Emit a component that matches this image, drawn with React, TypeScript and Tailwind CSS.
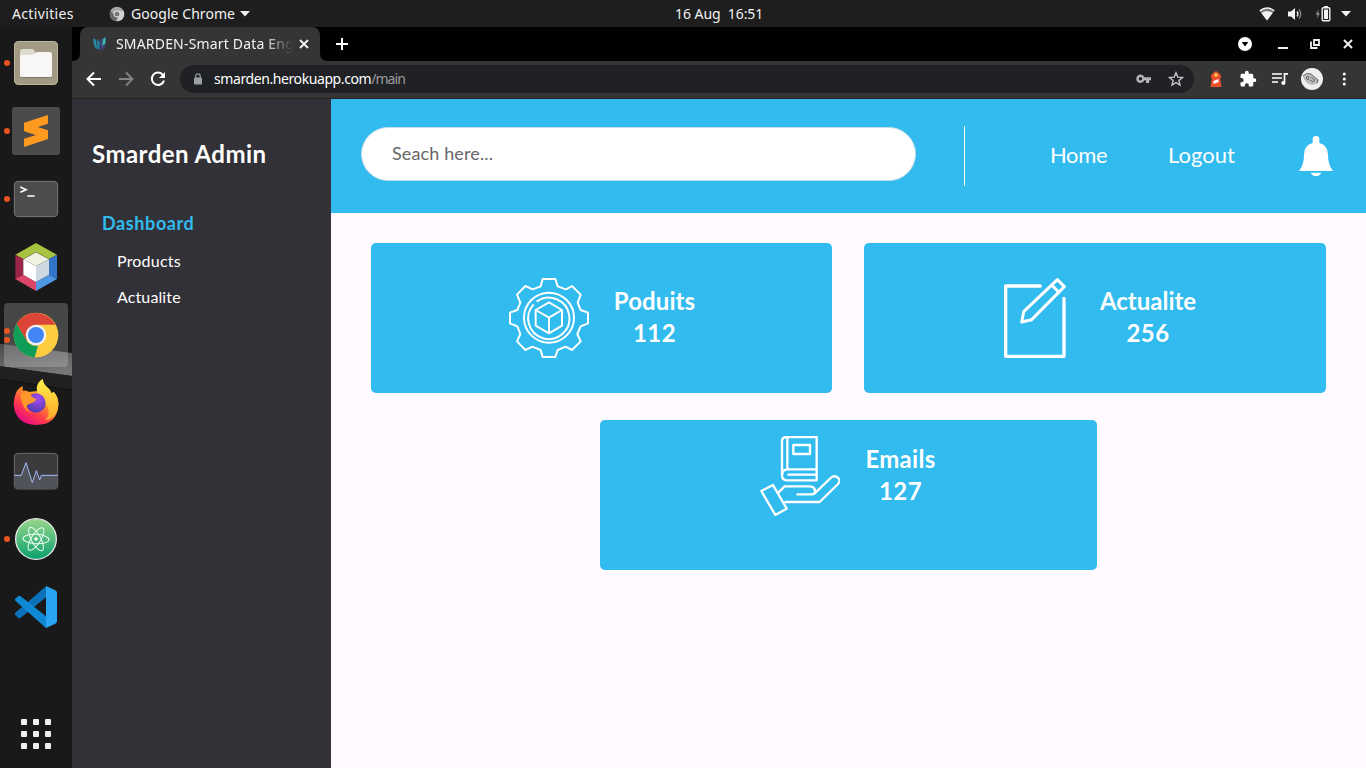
import React from "react";

const UI = "font-['Noto_Sans',sans-serif]";

function DockItem({ dots = 0, active = false, viewBox, children }: { dots?: number; active?: boolean; viewBox: string; children: React.ReactNode }) {
  return (
    <div className="relative flex h-[68px] w-[72px] shrink-0 items-center justify-center">
      {active && <div className="absolute left-1 top-[2px] h-16 w-16 rounded-[4px] bg-white/20" />}
      <svg className="relative h-12 w-12 overflow-visible" viewBox={viewBox}>{children}</svg>
      {dots > 0 && (
        <div className="absolute left-[4px] top-0 flex h-full flex-col items-center justify-center gap-[3px]">
          {Array.from({ length: dots }, (_, i) => (
            <span key={i} className="h-[6px] w-[6px] rounded-full bg-[#e95420]" />
          ))}
        </div>
      )}
    </div>
  );
}

function Dock() {
  return (
    <nav className="relative flex w-[72px] shrink-0 flex-col overflow-hidden bg-[#191919] pt-[2px]">
      <svg className="absolute left-0 top-[310px] h-[100px] w-[72px]" viewBox="0 330 216 300">
        <defs>
          <linearGradient id="band" x1="0" y1="0" x2="0.3" y2="1">
            <stop offset="0" stopColor="#4b4b4b" />
            <stop offset="1" stopColor="#757575" />
          </linearGradient>
        </defs>
        <path d="M0 350L216 378V447L0 418Z" fill="url(#band)" />
        <path d="M0 418L216 447V492L0 460Z" fill="#202020" />
        <path d="M0 457L216 490" stroke="#111" strokeWidth="4" />
      </svg>
      <DockItem dots={1} viewBox="36 36 144 144">
        <rect x="42" y="42" width="132" height="132" rx="14" fill="#a39a83" />
        <rect x="43.500" y="43.500" width="129" height="129" rx="13" fill="none" stroke="#bbb4a1" strokeWidth="3" />
        <path d="M60 84V74q0-8 8-8h27q5 0 7 4l4 8h30v20H60Z" fill="#dedacd" />
        <path d="M60 89q0-6 6-6h30q5 0 9-4 5-4 10-4h33q8 0 8 8v60q0 8-8 8H68q-8 0-8-8Z" fill="#f8f7f5" />
        <path d="M64 151q2 1 4 1h80q4 0 6-2" stroke="#766f5d" strokeWidth="3" fill="none" />
      </DockItem>
      <DockItem dots={1} viewBox="36 240 144 144">
        <rect x="36" y="240" width="144" height="144" rx="8" fill="#4a4a4a" />
        <path d="M72 335l72-22v23l-72 24Z" fill="#ff9a20" />
        <path d="M72 312l72 24v-23l-36-11Z" fill="#e28210" />
        <path d="M72 287l72-23v26l-31 10 31 10v26l-72-24Z" fill="#ff9a20" />
      </DockItem>
      <DockItem dots={1} viewBox="36 444 144 144">
        <rect x="43" y="463" width="130" height="106" rx="11" fill="#4c4c4c" stroke="#777" strokeWidth="3" />
        <path d="M61 480l17 8-17 8M82 507h22" stroke="#fff" strokeWidth="5" fill="none" />
      </DockItem>
      <DockItem viewBox="36 48 144 144">
        <path d="M108 48l63 35-24 13-39-21-38 21-24-13Z" fill="#a8c33f" />
        <path d="M46 83l24 13v47l-24 13Z" fill="#9b2546" />
        <path d="M46 156l24-13 38 22v27Z" fill="#dc4669" />
        <path d="M171 83l-24 13v47l24 13Z" fill="#3274c7" />
        <path d="M171 156l-24-13-39 22v27Z" fill="#4d98e3" />
        <path d="M108 76l39 21-39 21-38-21Z" fill="#eff2df" />
        <path d="M70 97l38 21v47l-38-22Z" fill="#fff" />
        <path d="M147 97l-39 21v47l39-22Z" fill="#ccd8e2" />
      </DockItem>
      <DockItem dots={2} active viewBox="36 252 144 144">
        <circle cx="108" cy="324" r="67" fill="#ffcd40" />
        <path d="M50 290A67 67 0 0 1 166 293H108L79 341Z" fill="#db4437" />
        <path d="M50 290l29 50q12 19 35 16l-10 35A67 67 0 0 1 50 290Z" fill="#0f9d58" />
        <circle cx="108" cy="324" r="31" fill="#f1f1f1" />
        <circle cx="108" cy="324" r="24" fill="#4285f4" />
      </DockItem>
      <DockItem viewBox="36 456 144 144">
        <defs>
          <linearGradient id="fx" x1="0.85" y1="0.1" x2="0.25" y2="1">
            <stop offset="0" stopColor="#fff44f" />
            <stop offset="0.4" stopColor="#ff9825" />
            <stop offset="0.7" stopColor="#ff3b4d" />
            <stop offset="1" stopColor="#e30587" />
          </linearGradient>
          <linearGradient id="fy" x1="0" y1="0" x2="0" y2="1">
            <stop offset="0" stopColor="#fff04a" />
            <stop offset="1" stopColor="#ffa52b" />
          </linearGradient>
          <radialGradient id="fg" cx="0.6" cy="0.3" r="0.8">
            <stop offset="0" stopColor="#a64bf0" />
            <stop offset="1" stopColor="#473aa6" />
          </radialGradient>
        </defs>
        <path d="M48 497q5-12 20-20v14q12-2 20 4 8-2 22-2 4-28 18-37 2 18 16 26 8 6 10 17l7-5q14 16 14 38-2 62-67 62-61-2-67-60 0-22 7-37Z" fill="url(#fx)" />
        <path d="M110 483q2-18 18-27 2 18 18 30 13 12 9 26 6-9 5-18 16 16 15 42-2 22-16 34-10 9-25 10 17-14 11-34-5-15-18-25-14-12-17-38Z" fill="url(#fy)" />
        <circle cx="108" cy="528" r="29" fill="url(#fg)" />
        <path d="M60 505q14-13 33-9-4 6 1 12 8 7 14 8-1 9-15 13-11 3-14 10 4 17 22 19-19 1-29-17-7-15-12-36Z" fill="#ff982b" />
      </DockItem>
      <DockItem viewBox="36 51 144 144">
        <rect x="43" y="70" width="130" height="107" rx="11" fill="#3b3b3d" stroke="#6b6b6b" strokeWidth="3" />
        <path d="M44 135h20l14-36 19 59 12-36 11 28 4-15h48v31q0 10-10 10H54q-10 0-10-10Z" fill="#505359" />
        <path d="M42 136h22l14-38 19 60 12-36 10 28 5-14h50" fill="none" stroke="#a4baf5" strokeWidth="3" />
      </DockItem>
      <DockItem dots={1} viewBox="36 255 144 144">
        <defs>
          <linearGradient id="atom" x1="0" y1="0" x2="0" y2="1">
            <stop offset="0" stopColor="#9bd68c" />
            <stop offset="1" stopColor="#08a16d" />
          </linearGradient>
        </defs>
        <circle cx="108" cy="327" r="61" fill="url(#atom)" stroke="#e9e9e9" strokeWidth="4" />
        <g fill="none" stroke="#e8fff0" strokeWidth="3">
          <ellipse cx="108" cy="327" rx="39" ry="14" transform="rotate(3 108 327)" />
          <ellipse cx="108" cy="327" rx="39" ry="14" transform="rotate(62 108 327)" />
          <ellipse cx="108" cy="327" rx="39" ry="14" transform="rotate(122 108 327)" />
        </g>
        <circle cx="108" cy="327" r="5.500" fill="#fff" />
      </DockItem>
      <DockItem viewBox="36 459 144 144">
        <path d="M45 549l93-80v33l-77 62q-4 2-7-1l-8-8q-3-4-1-6Z" fill="#0b71b9" />
        <path d="M138 594L46 512q-3-4 0-6l8-7q4-3 8 0l76 60Z" fill="#1089d5" />
        <path d="M138 468l28 13q5 3 5 8v84q0 5-5 8l-28 13Z" fill="#27a5f3" />
      </DockItem>
      <div className="mt-auto mb-[19px] ml-[21px] grid w-[30px] grid-cols-3 gap-[6px]">
        {Array.from({ length: 9 }, (_, i) => (
          <span key={i} className="h-[6px] w-[6px] rounded-[1px] bg-[#f0f0ee]" />
        ))}
      </div>
    </nav>
  );
}

function TopBar() {
  return (
    <div className={`flex h-[27px] shrink-0 items-center bg-[#1e1e1e] text-[14px] leading-[27px] text-[#f2f2f2] ${UI}`}>
      <span className="ml-3 w-[63px] whitespace-nowrap tracking-[0.35px]">Activities</span>
      <svg className="ml-[34px] h-4 w-4" viewBox="0 0 16 16">
        <circle cx="8" cy="8" r="7.300" fill="#a5a5a5" />
        <path d="M1.600 4.500A7.300 7.300 0 0 0 7 15.200L9.500 9 5 9Z" fill="#666" />
        <path d="M8 5h6.600A7.300 7.300 0 0 1 7.500 15.300L11 9Z" fill="#cfcfcf" />
        <circle cx="8" cy="8" r="3.400" fill="#e5e5e5" />
        <circle cx="8" cy="8" r="2.500" fill="#777" />
      </svg>
      <span className="ml-[6px] w-[104px] whitespace-nowrap tracking-[0.05px]">Google Chrome</span>
      <svg className="ml-[5px] h-[6px] w-[10px]" viewBox="0 0 10 6"><path d="M0 0h10L5 5.500Z" fill="#f2f2f2" /></svg>
      <span className="-mt-px ml-[425px] w-[90px] whitespace-pre tracking-[-0.05px]">16 Aug  16:51</span>
      <div className="ml-auto flex items-center pr-[15px]">
        <svg className="h-4 w-4" viewBox="0 0 16 16">
          <path d="M8 14.500L.5 4.800Q8-1 15.500 4.800Z" fill="#777" />
          <path d="M.8 4.800Q8-.8 15.200 4.800" stroke="#f2f2f2" strokeWidth="1.500" fill="none" />
          <path d="M8 14.500L2.300 7Q8 3 13.700 7Z" fill="#f2f2f2" />
        </svg>
        <svg className="ml-[12px] h-4 w-4" viewBox="0 0 16 16">
          <path d="M1 5.500h3L8 2v12L4 10.500H1Z" fill="#f2f2f2" />
          <path d="M10 5.500q2 2.500 0 5" stroke="#eee" strokeWidth="1.300" fill="none" />
          <path d="M12 3.500q3.500 4.500 0 9" stroke="#888" strokeWidth="1.300" fill="none" />
        </svg>
        <svg className="-mt-px ml-[12px] h-[17px] w-4" viewBox="0 0 16 17">
          <path d="M4 4L.5 9.500h2L2 13.500 5 8H3Z" fill="#888" />
          <path d="M9 1h4v2H9Z" fill="#f2f2f2" />
          <rect x="7.200" y="2.700" width="7.600" height="13" rx="1" fill="none" stroke="#f2f2f2" strokeWidth="1.400" />
          <rect x="9" y="4.500" width="4" height="9.500" fill="#f2f2f2" />
        </svg>
        <svg className="ml-[10px] h-[6px] w-[10px]" viewBox="0 0 10 6"><path d="M0 0h10L5 5.500Z" fill="#f2f2f2" /></svg>
      </div>
    </div>
  );
}

function TabStrip() {
  return (
    <div className="flex h-[34px] shrink-0 items-center bg-black">
      <div className="relative ml-2 flex h-full w-[240px] items-center rounded-t-[8px] bg-[#353535]">
        <svg className="absolute -left-2 bottom-0 h-2 w-2" viewBox="0 0 8 8"><path d="M8 0v8H0Q8 8 8 0Z" fill="#353535" /></svg>
        <svg className="absolute -right-2 bottom-0 h-2 w-2" viewBox="0 0 8 8"><path d="M0 0v8h8Q0 8 0 0Z" fill="#353535" /></svg>
        <svg className="ml-[12px] h-4 w-4" viewBox="0 0 16 16">
          <path d="M1.500 2l2.500 2 1 9-1.500-1Q1 8 1.500 2Z" fill="#2d8ca5" />
          <path d="M5 3l3 3-.5 8L5 12.500Z" fill="#247a98" />
          <path d="M8.500 3l2-1v6l-2.500 7Z" fill="#3a4589" />
          <path d="M11 3l2.500-2q.5 8-2 10l-1.500 1Z" fill="#3cbbb9" />
          <path d="M11 9l2.500-1q-1 5-4.500 7Z" fill="#423c7e" />
        </svg>
        <div className={`-mt-px ml-2 w-[177px] overflow-hidden whitespace-nowrap text-[14px] tracking-[0.18px] text-[#f3f3f3] [mask-image:linear-gradient(to_right,#000_148px,transparent_177px)] ${UI}`}>SMARDEN-Smart Data Eng</div>
        <svg className="ml-[6px] h-[10px] w-[10px]" viewBox="0 0 10 10"><path d="M1 1l8 8M9 1L1 9" stroke="#f4f4f4" strokeWidth="1.800" /></svg>
      </div>
      <svg className="ml-4 h-3 w-3" viewBox="0 0 12 12"><path d="M6 0v12M0 6h12" stroke="#fff" strokeWidth="2" /></svg>
      <div className="ml-auto flex items-center pr-[13px]">
        <svg className="h-[14px] w-[14px]" viewBox="0 0 14 14"><circle cx="7" cy="7" r="7" fill="#fff" /><path d="M3.700 5h6.600L7 9.500Z" fill="#000" /></svg>
        <svg className="ml-[26px] h-[10px] w-[10px]" viewBox="0 0 10 10"><path d="M0 9h10" stroke="#eee" strokeWidth="2" /></svg>
        <svg className="ml-[22px] h-[10px] w-[10px]" viewBox="0 0 10 10"><path d="M4 1h5v5H4ZM1 2.500V9h6.500" stroke="#eee" strokeWidth="1.800" fill="none" /></svg>
        <svg className="ml-[23px] h-[10px] w-[10px]" viewBox="0 0 10 10"><path d="M1 1l8 8M9 1L1 9" stroke="#eee" strokeWidth="2" /></svg>
      </div>
    </div>
  );
}

function Toolbar() {
  return (
    <div className="flex h-[38px] shrink-0 items-center border-b border-[#242424] bg-[#353535] pb-px pl-[14px] pr-[13px]">
      <svg className="h-4 w-4" viewBox="0 0 16 16"><path d="M15 8H2M8 1.500L1.500 8 8 14.500" stroke="#fff" strokeWidth="2" fill="none" /></svg>
      <svg className="ml-4 h-4 w-4" viewBox="0 0 16 16"><path d="M1 8h13M8 1.500L14.500 8 8 14.500" stroke="#858585" strokeWidth="1.800" fill="none" /></svg>
      <svg className="ml-4 h-4 w-4" viewBox="0 0 16 16">
        <path d="M13 4A6.200 6.200 0 1 0 14 9.500" stroke="#fff" strokeWidth="2" fill="none" />
        <path d="M15 1v6H9Z" fill="#fff" />
      </svg>
      <div className="ml-[14px] flex h-7 w-[1014px] items-center rounded-full bg-[#202124] pr-[10px]">
        <svg className="ml-[14px] h-[12px] w-2" viewBox="0 0 8 12">
          <path d="M1.800 5V3q0-2.200 2.200-2.200T6.200 3v2" stroke="#9aa0a6" strokeWidth="1.200" fill="none" />
          <rect y="4.500" width="8" height="7" rx="1" fill="#9aa0a6" />
        </svg>
        <span className={`-mt-px ml-3 whitespace-nowrap text-[14px] tracking-[-0.95px] text-[#9b9c9e] ${UI}`}><span className="tracking-[-0.41px] text-white">smarden.herokuapp.com</span>/main</span>
        <svg className="ml-auto h-[10px] w-[15px]" viewBox="0 0 15 10">
          <path fillRule="evenodd" d="M4.500.5A4.200 4.200 0 0 0 4.500 9 4.200 4.200 0 0 0 8.400 6.300H10V9h3.200V6.300H15V3.200H8.400A4.200 4.200 0 0 0 4.500.5ZM4.500 3a1.700 1.700 0 1 1 0 3.500 1.700 1.700 0 0 1 0-3.500Z" fill="#b4b5b6" />
        </svg>
        <svg className="ml-[17px] h-4 w-4" viewBox="0 0 16 16"><path d="M8 1.800l1.800 4.300 4.700.4-3.600 3 1.100 4.600L8 11.600l-4 2.500 1.100-4.600-3.600-3 4.700-.4Z" stroke="#c3c4c5" strokeWidth="1.400" fill="none" /></svg>
      </div>
      <svg className="ml-[15px] h-4 w-[14px]" viewBox="0 0 14 16">
        <path d="M3 3l4-3 4 3v1h1v3h-1l1.500 9h-11L3 7H2V4h1Z" fill="#ec4f2c" />
        <circle cx="7" cy="4" r="1.800" fill="#fbd24b" />
        <path d="M4.500 10l5-2v3l-5 2Z" fill="#fff" />
      </svg>
      <svg className="ml-[16px] h-[18px] w-[18px]" viewBox="0 0 24 24"><path fill="#fff" d="M20.500 11H19V7c0-1.100-.9-2-2-2h-4V3.500a2.500 2.500 0 0 0-5 0V5H4c-1.100 0-2 .9-2 2v3.800h1.500a2.700 2.700 0 0 1 0 5.400H2V20c0 1.100.9 2 2 2h3.800v-1.500a2.700 2.700 0 0 1 5.400 0V22H17c1.100 0 2-.9 2-2v-4h1.500a2.500 2.500 0 0 0 0-5Z" /></svg>
      <svg className="ml-[15px] h-4 w-4" viewBox="0 0 16 16">
        <path d="M0 3h10M0 7h10M0 11h6" stroke="#fff" strokeWidth="1.500" />
        <path d="M12.500 12V2.800H16" stroke="#fff" strokeWidth="1.700" fill="none" />
        <circle cx="11.300" cy="12" r="2" fill="#fff" />
      </svg>
      <svg className="ml-[13px] h-[22px] w-[22px]" viewBox="0 0 22 22">
        <circle cx="11" cy="11" r="11" fill="#efefef" />
        <path d="M2 8q5-5 9-1l7 5-2 4-5 1Q3 15 2 8Z" fill="#bdbdbd" />
        <path d="M2 8q3-4 8-2l7 6-1 3M5 10q1-3 3-1l-1 3ZM10 9l4 3-2 2-3-2" stroke="#5b5b5b" strokeWidth="0.900" fill="none" />
      </svg>
      <svg className="ml-[19px] h-[14px] w-[4px]" viewBox="0 0 4 14"><g fill="#fff"><circle cx="2.300" cy="2" r="1.500" /><circle cx="2.300" cy="7" r="1.500" /><circle cx="2.300" cy="12" r="1.500" /></g></svg>
    </div>
  );
}

function Card({ className, icon, title, value, titleClass }: { className: string; icon: React.ReactNode; title: string; value: string; titleClass: string }) {
  return (
    <section className={`flex h-[150px] shrink-0 rounded-[5px] bg-[#31bbee] font-bold text-white ${className}`}>
      {icon}
      <div className="ml-[25px] mt-[7px] flex flex-col items-center text-[24px] leading-8">
        <span className={`flex justify-center whitespace-nowrap ${titleClass}`}>{title}</span>
        <span className="tracking-[0.45px]">{value}</span>
      </div>
    </section>
  );
}

const gearIcon = (
  <svg className="h-20 w-20" viewBox="57 54 240 240" fill="none" stroke="#fff" strokeWidth="6" strokeLinejoin="round">
    <path d="M158 57h38l7 22 25 9 18-10 26 26-9 24 9 22 22 8v32l-22 9-10 23 10 22-26 26-19-10-24 10-7 21h-38l-6-21-25-10-21 10-25-26 10-22-9-23-22-9v-32l22-8 9-22-10-24 25-26 22 10 24-9Z" />
    <circle cx="177" cy="173" r="75" />
    <path d="M140 125a62 62 0 1 1-9 8" />
    <path d="M177 127l39 23v47l-39 23-40-23v-47ZM137 150l40 23 39-23M177 173v47" />
  </svg>
);

const editIcon = (
  <svg className="h-20 w-20" viewBox="45 54 240 240" fill="none" stroke="#fff" strokeWidth="10" strokeLinejoin="round" strokeLinecap="round">
    <path d="M181 78H77v211h175V115" />
    <path d="M232 59l21 21-98 99-30 7 6-31ZM215 75l22 22" strokeWidth="9" />
  </svg>
);

const bookIcon = (
  <svg className="h-20 w-20" viewBox="60 48 240 240" fill="none" stroke="#fff" strokeWidth="7" strokeLinejoin="round" strokeLinecap="round">
    <path d="M230 51H139q-13 0-13 13v102q0 15 15 15h89V51M142 52v96M230 148h-87q-16 0-16 15M230 164h-85" />
    <path d="M160 75h50v27h-50Z" />
    <path d="M64 213l35-18 41 71-34 19ZM115 218l19-19h75q16 0 16 15 0 9-9 9h-44M224 220l48-46q9-9 19-3 13 9 3 21l-55 54H136" />
  </svg>
);

function WebApp() {
  return (
    <div className="flex min-h-0 flex-1 font-['Lato',sans-serif]">
      <aside className="flex w-[259px] shrink-0 flex-col bg-[#323137] text-white">
        <h1 className="ml-5 mt-[37px] whitespace-nowrap text-[24px] font-bold leading-9 tracking-[0.45px]">Smarden Admin</h1>
        <a className="ml-[30px] mt-[37px] text-[18px] font-bold leading-[28px] tracking-[0.6px] text-[#31bbee]">Dashboard</a>
        <a className="ml-[45px] mt-[12px] text-[16px] leading-6 tracking-[0.2px]">Products</a>
        <a className="ml-[45px] mt-[12px] text-[16px] leading-6 tracking-[0.12px]">Actualite</a>
      </aside>
      <div className="flex flex-1 flex-col bg-[#fffaff]">
        <header className="flex h-[114px] shrink-0 bg-[#31bbee] text-white">
          <div className="ml-[30px] mt-[28px] flex h-[54px] w-[555px] items-center rounded-full border border-[#c7dce6] bg-white pb-[2px] pl-[30px] text-[18px] tracking-[0.13px] text-[#666]">Seach here...</div>
          <div className="ml-[48px] mt-[27px] h-[60px] w-px bg-white" />
          <a className="ml-[85px] mt-[40px] w-[58px] whitespace-nowrap text-[22px] leading-8 tracking-[-0.35px]">Home</a>
          <a className="ml-[60px] mt-[40px] w-[70px] whitespace-nowrap text-[22px] leading-8">Logout</a>
          <svg className="ml-[61px] mt-[37px] h-10 w-[34px]" viewBox="1077 108 102 120" fill="#fff">
            <path d="M1118 129v-11q0-10 10-10t10 10v11q26 7 26 35 0 30 15 49H1077q15-19 15-49 0-28 26-35ZM1112 218h32q-5 10-16 10t-16-10Z" />
          </svg>
        </header>
        <main className="flex flex-col pl-10 pr-10 pt-[30px]">
          <div className="flex gap-8">
            <Card className="w-[461px] pl-[138px] pt-[35px]" icon={gearIcon} title="Poduits" value="112" titleClass="w-[81px] tracking-[0.1px]" />
            <Card className="w-[462px] pl-[131px] pt-[35px]" icon={editIcon} title="Actualite" value="256" titleClass="w-[96px]" />
          </div>
          <Card className="ml-[228.5px] mt-[27px] w-[497px] pl-[160.5px] pt-[16px]" icon={bookIcon} title="Emails" value="127" titleClass="w-[71px] tracking-[0.3px]" />
        </main>
      </div>
    </div>
  );
}

export default function App() {
  return (
    <div className="flex h-[768px] w-[1366px] flex-col overflow-hidden bg-black">
      <TopBar />
      <div className="flex min-h-0 flex-1">
        <Dock />
        <div className="flex min-w-0 flex-1 flex-col">
          <TabStrip />
          <Toolbar />
          <WebApp />
        </div>
      </div>
    </div>
  );
}
